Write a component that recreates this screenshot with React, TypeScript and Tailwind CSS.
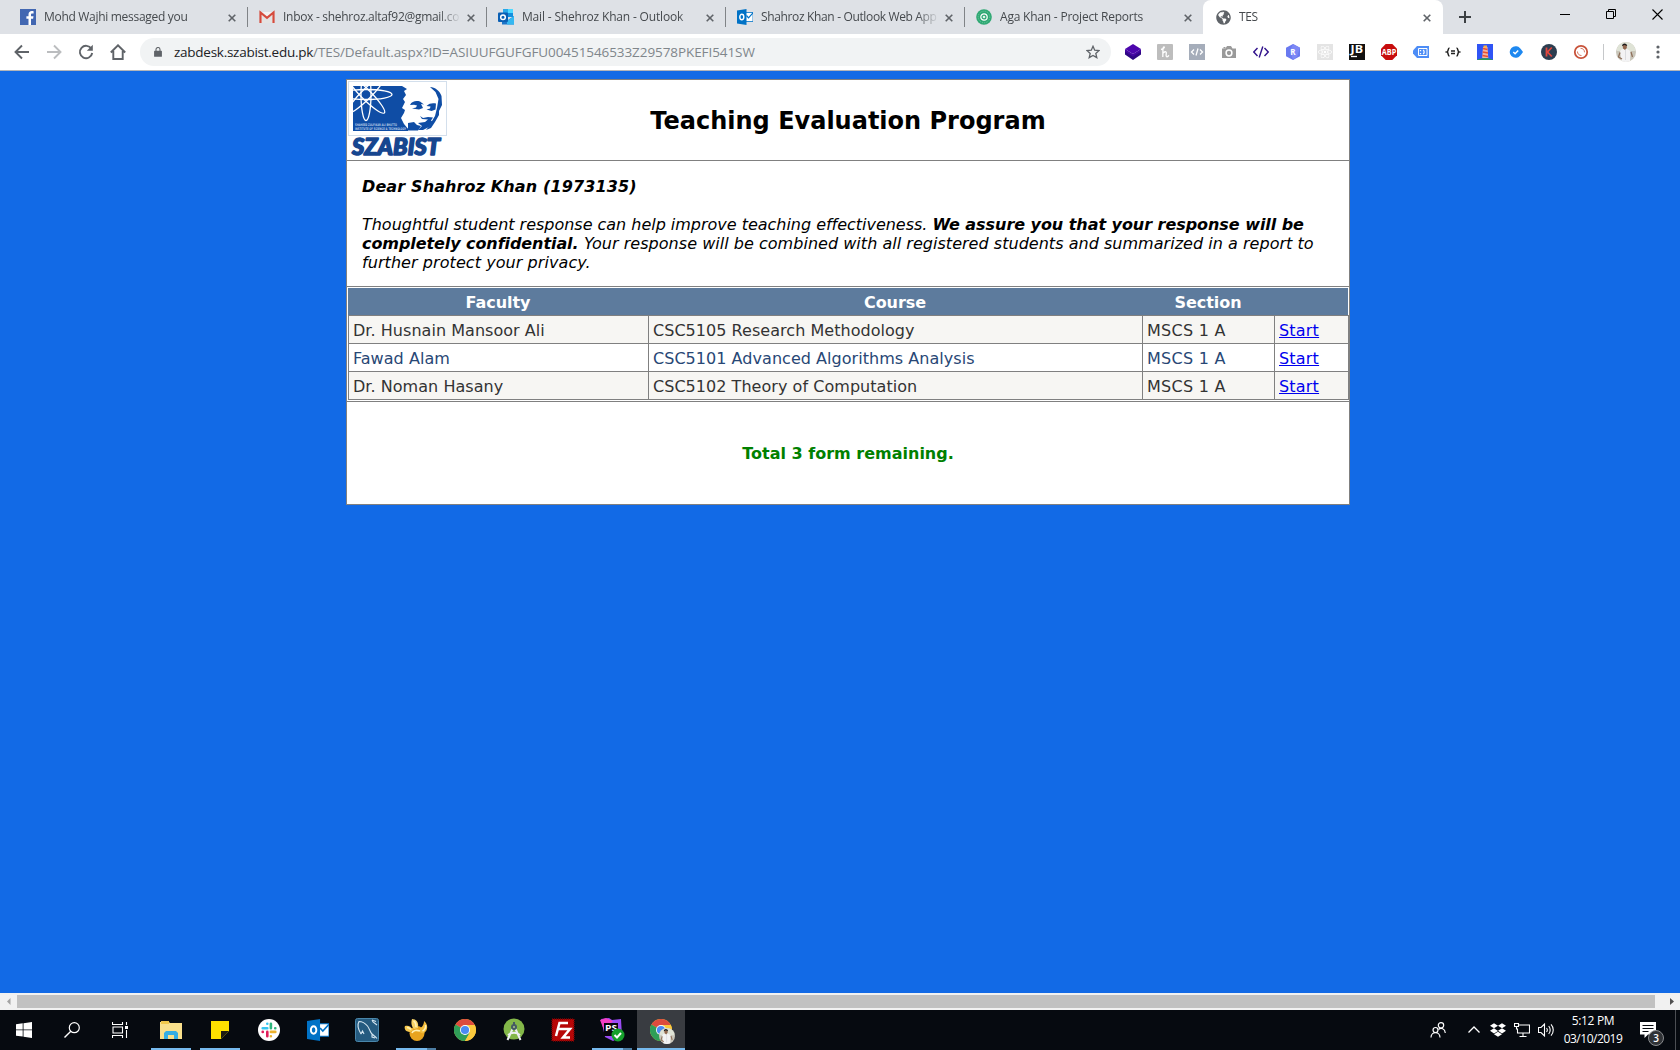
import type { ReactNode } from "react";
import { FaDropbox, FaReact, FaGlobeAmericas } from "react-icons/fa";

type IconProps = { children: ReactNode; size?: number; box?: string };

function Svg({ children, size = 16, box = "0 0 16 16" }: IconProps) {
  return (
    <svg width={size} height={size} viewBox={box} fill="none" className="block shrink-0">
      {children}
    </svg>
  );
}

/* ---------- tab icons ---------- */

const FacebookIcon = () => (
  <Svg>
    <path d="M0 0h16v16H0z" fill="#4267b2" />
    <path d="M11 16V9.800h2.100l.4-2.500H11V5.800c0-.8.3-1.300 1.300-1.300h1.300V2.300C13.300 2.200 12.600 2.100 11.800 2.100 9.800 2.100 8.500 3.300 8.500 5.500v1.800H6.400v2.500h2.100V16z" fill="#fff" />
  </Svg>
);

const GmailIcon = () => (
  <Svg>
    <path d="M1 3h14v11H1z" fill="#f2f2f2" />
    <path d="M3 14V6l5 4 5-4v8z" fill="#e3e3e3" />
    <path d="M1.500 14V3.500L8 8.800l6.500-5.300V14" stroke="#d54b3d" strokeWidth="2.200" />
  </Svg>
);

const OutlookNewIcon = () => (
  <Svg>
    <path d="M5 0h10v8H5z" fill="#1490df" />
    <path d="M10 0h5v4h-5z" fill="#50d9ff" />
    <path d="M5 0h5v4H5z" fill="#28a8ea" />
    <path d="M4 7l6 4 6-4v8.500H4z" fill="#1b75c9" />
    <path d="M9 12l7-5v8.500H9z" fill="#35b8f1" />
    <rect y="3.500" width="10" height="9.500" rx="1" fill="#0a5fb4" />
    <circle cx="5" cy="8.200" r="2.300" stroke="#fff" strokeWidth="1.500" />
  </Svg>
);

const OutlookIcon = ({ size = 16 }: { size?: number }) => (
  <Svg size={size}>
    <path d="M8 3.500h8v9H8z" fill="#fff" stroke="#0072c6" strokeWidth=".8" />
    <path d="M9.500 6.500l2 2.300 4.500-5" stroke="#0072c6" strokeWidth="1.200" />
    <path d="M0 1.500L9.500 0v16L0 14.500z" fill="#0072c6" />
    <ellipse cx="4.800" cy="8" rx="2" ry="2.700" stroke="#fff" strokeWidth="1.400" />
  </Svg>
);

const AgaIcon = () => (
  <Svg>
    <circle cx="8" cy="8" r="7.800" fill="#2fa873" />
    <circle cx="8" cy="8" r="5.800" stroke="#6ccaa0" strokeWidth="1" strokeDasharray="1 1" />
    <circle cx="8" cy="8" r="3.200" stroke="#fff" strokeWidth="1.200" />
    <circle cx="8" cy="8" r="1.300" fill="#dff5ea" />
  </Svg>
);

const CloseX = () => (
  <Svg size={8} box="0 0 8 8">
    <path d="M.7.7l6.600 6.600M7.300.7L.7 7.300" stroke="#5f6368" strokeWidth="1.600" />
  </Svg>
);

const tabs = [
  { icon: <FacebookIcon />, title: "Mohd Wajhi messaged you", ls: "tracking-[-0.3px]" },
  { icon: <GmailIcon />, title: "Inbox - shehroz.altaf92@gmail.co", ls: "tracking-[-0.29px]" },
  { icon: <OutlookNewIcon />, title: "Mail - Shehroz Khan - Outlook", ls: "tracking-[-0.17px]" },
  { icon: <OutlookIcon />, title: "Shahroz Khan - Outlook Web App", ls: "tracking-[-0.35px]" },
  { icon: <AgaIcon />, title: "Aga Khan - Project Reports", ls: "tracking-[-0.21px]" },
  { icon: <FaGlobeAmericas size={15} color="#5f6368" />, title: "TES", ls: "tracking-[-0.4px]", active: true },
];

function TabStrip() {
  return (
    <div className="flex h-[34px] bg-[#dee1e6] pl-2">
      {tabs.map((t, i) => (
        <div key={t.title} className={t.active ? "relative flex h-[34px] w-[240px] items-center rounded-t-lg bg-white pl-3" : "relative flex h-[34px] w-[239px] items-center pl-3"}>
          {i > 0 && !t.active && <span className="absolute left-0 top-[7px] h-5 w-px bg-[#808387]" />}
          <span className="flex w-4 justify-center">{t.icon}</span>
          <span className="ml-2 w-[177px] overflow-hidden whitespace-nowrap text-[12px] leading-4 text-[#45494d] [mask-image:linear-gradient(to_right,black_156px,transparent_178px)]">
            <span className={t.ls}>{t.title}</span>
          </span>
          <span className="ml-[7px] mt-px"><CloseX /></span>
        </div>
      ))}
      <div className="flex h-[34px] w-[43px] items-center justify-center">
        <Svg size={12} box="0 0 12 12"><path d="M6 0v12M0 6h12" stroke="#3c4043" strokeWidth="2" /></Svg>
      </div>
      <div className="ml-[56px] flex h-[28px] text-black">
        <span className="flex w-[46px] items-center justify-center"><Svg size={10} box="0 0 10 10"><path d="M0 5.500h10" stroke="#000" /></Svg></span>
        <span className="flex w-[46px] items-center justify-center"><Svg size={10} box="0 0 10 10"><path d="M.5 2.500h7v7h-7zM2.500 2.500v-2h7v7h-2" stroke="#000" /></Svg></span>
        <span className="flex w-[46px] items-center justify-center"><Svg size={11} box="0 0 11 11"><path d="M.5.5l10 10M10.500.5l-10 10" stroke="#000" strokeWidth="1.100" /></Svg></span>
      </div>
    </div>
  );
}

/* ---------- toolbar ---------- */

const extensions: ReactNode[] = [
  <Svg><path d="M8 0l8 5-8 5-8-5z" fill="#4c06ad" /><path d="M0 6l8 5 8-5v4.500L8 16l-8-5.500z" fill="#2e0783" /><path d="M0 5l8 5 8-5v2.500l-8 5-8-5z" fill="#4406a3" /></Svg>,
  <Svg><rect width="16" height="16" rx="1" fill="#bdbdbd" /><path d="M4 5.500C6.500 5 8.200 3 7 2.800 5.500 2.700 6 8 5.800 13M5.800 9.500C7 7.500 9.500 7 9.300 9c-.2 1.800-.5 3.800.7 3.800.9 0 1.500-.8 1.800-1.500" stroke="#fff" strokeWidth="1.300" /></Svg>,
  <Svg><path d="M0 0h16v16H0z" fill="#a5adba" /><path d="M5 5.500L2.500 8 5 10.500M11 5.500L13.500 8 11 10.500M9 4.500l-2 7" stroke="#fff" strokeWidth="1.300" /></Svg>,
  <Svg><path d="M1 4.500h3.500L6 2h4l1.500 2.500H15V14H1z" fill="#9a9a9a" /><path d="M2.500 3h2v1.500h-2z" fill="#9a9a9a" /><circle cx="8" cy="9" r="2.900" stroke="#fff" strokeWidth="1.500" /></Svg>,
  <Svg><path d="M4.500 4L.8 8l3.700 4M11.500 4l3.700 4-3.700 4M9.800 2.500L6.200 13.500" stroke="#32138c" strokeWidth="1.400" /></Svg>,
  <Svg><path d="M8 0l7 3.800v8.400L8 16l-7-3.800V3.800z" fill="#6979f0" /><path d="M8 0l7 3.800-3 9L8 16l-3-9z" fill="#7c88f5" /><text x="8" y="11" textAnchor="middle" fontSize="8" fontWeight="700" fill="#fff">R</text></Svg>,
  <span className="flex size-4 items-center justify-center bg-[#e4e4e4]"><FaReact size={14} color="#fff" /></span>,
  <Svg><path d="M0 0h16v16H0z" fill="#111" /><text x="1.500" y="9.200" fontSize="10" fontWeight="700" fill="#fff" textLength="12.500" lengthAdjust="spacingAndGlyphs">JB</text><path d="M2 12.500h6" stroke="#fff" strokeWidth="1.300" /></Svg>,
  <Svg><path d="M4.700 0h6.600L16 4.700v6.600L11.300 16H4.700L0 11.300V4.700z" fill="#c70d0d" /><text x=".8" y="11" fontSize="8" fontWeight="700" fill="#fff" textLength="14.400" lengthAdjust="spacingAndGlyphs">ABP</text></Svg>,
  <Svg><path d="M4 2h12v12H4L0 9.500v-3z" fill="#4d8df6" /><path d="M5.500 4.500h8.500v7H5.500z" stroke="#fff" /><path d="M7.500 6v1.200M7.500 9v1.200M10 6c1.500.5 1.500 3.500 0 4" stroke="#fff" strokeWidth="1.300" /></Svg>,
  <Svg><path d="M4.500 4C2.500 4 3.800 7.500 2 8c1.800.5.500 4 2.500 4M11.500 4c2 0 .7 3.500 2.500 4-1.800.5-.5 4-2.500 4M6 7h4M6 9.500h4" stroke="#222" strokeWidth="1.500" /></Svg>,
  <Svg><path d="M0 0h16v16H0z" fill="#2f54f5" /><path d="M6 3h4.500l.8 11H5.200z" fill="#f3b39c" /><path d="M6 4.500l4.500 1M5.800 8l5.200 1M5.500 11.500l5.500 1" stroke="#e9502f" strokeWidth="1.500" /><path d="M6.500 1.500h3.500V3.500H6.500z" fill="#f9b13b" /><path d="M0 16c2-2.500 14-2.500 16 0z" fill="#2a9b57" /></Svg>,
  <Svg><path d="M6.500 2.200c3 0 4.500 1.200 7.500 5.800-3 4.600-4.500 5.800-7.500 5.800a5.800 5.800 0 010-11.600z" fill="#1e88f0" /><path d="M4.300 8l1.800 1.700L9.200 6.500" stroke="#fff" strokeWidth="1.500" /></Svg>,
  <Svg><circle cx="8" cy="8" r="8" fill="#2c3e50" /><path d="M5.500 3.500v9M10.800 3.500L6.500 8l4.300 4.500" stroke="#e0473f" strokeWidth="1.800" /></Svg>,
  <Svg><circle cx="8" cy="8" r="6.200" stroke="#c8533a" strokeWidth="1.800" /><path d="M4.500 7.500a3.800 3.800 0 004 4M7.500 4.300a3.800 3.800 0 014 4" stroke="#c8533a" strokeWidth=".8" /></Svg>,
];

const Avatar = ({ size }: { size: number }) => (
  <Svg size={size} box="0 0 20 20">
    <circle cx="10" cy="10" r="10" fill="#c9c6ba" />
    <path d="M1 6a10 10 0 0118 0v3H1z" fill="#dfe3d6" />
    <path d="M4 9.500C5 7 7 7 9 7s4 .5 5.500 2.500L14 19a10 10 0 01-8.500 0z" fill="#f3f3f4" />
    <path d="M4 10.500L2.500 15 6 17M15 10l1.500 5" stroke="#8f705b" strokeWidth="1.300" />
    <path d="M9.500 8v10" stroke="#d4d5d9" strokeWidth=".8" />
    <path d="M6.500 3h4.300v3L9 8 7 6.500z" fill="#93684f" />
    <path d="M6 4c0-3.500 5.200-3.500 5.200 0L8.500 3z" fill="#1d1a19" />
  </Svg>
);

function Toolbar() {
  return (
    <div className="flex h-[37px] items-center border-b border-[#b3b5b9] bg-white pl-[6px]">
      <div className="flex">
        <span className="flex w-8 justify-center"><Svg><path d="M15 8H2M8 1.500L1.500 8 8 14.500" stroke="#5f6368" strokeWidth="1.900" /></Svg></span>
        <span className="flex w-8 justify-center"><Svg><path d="M1 8h13M8 1.500L14.500 8 8 14.500" stroke="#bbbdbf" strokeWidth="1.900" /></Svg></span>
        <span className="flex w-8 justify-center"><Svg><path d="M13.400 4.800A6.200 6.200 0 1014.200 9" stroke="#5f6368" strokeWidth="1.900" /><path d="M14.800.8v6H8.800z" fill="#5f6368" /></Svg></span>
        <span className="flex w-8 justify-center"><Svg><path d="M.8 8.500L8 1.300l7.200 7.200M3.300 7v8h9.400V7" stroke="#5f6368" strokeWidth="1.900" /></Svg></span>
      </div>
      <div className="ml-[6px] flex h-7 w-[971px] items-center rounded-full bg-[#f1f3f4] pl-[13px] pr-[11px]">
        <Svg size={10} box="0 0 10 12"><path d="M1 4.500h8a.7.700 0 01.7.700V11a.7.700 0 01-.7.700H1a.7.700 0 01-.7-.7V5.200A.7.700 0 011 4.500z" fill="#5f6368" /><path d="M2.600 5V3a2.400 2.400 0 014.800 0v2" stroke="#5f6368" strokeWidth="1.300" /></Svg>
        <span className="ml-[11px] whitespace-nowrap text-[13.500px] leading-5 text-[#80868b]">
          <span className="tracking-[-0.26px] text-[#202124]">zabdesk.szabist.edu.pk</span>
          <span className="tracking-[-0.08px]">/TES/Default.aspx?ID=ASIUUFGUFGFU00451546533Z29578PKEFI541SW</span>
        </span>
        <span className="ml-auto"><Svg size={14} box="0 0 14 14"><path d="M7 1.300l1.700 3.900 4.300.4-3.200 2.800 1 4.200L7 10.400l-3.800 2.200 1-4.200L1 5.600l4.300-.4z" stroke="#5f6368" strokeWidth="1.300" /></Svg></span>
      </div>
      <div className="ml-[6px] flex">
        {extensions.map((e, i) => (
          <span key={i} className="flex w-8 items-center justify-center">{e}</span>
        ))}
      </div>
      <span className="ml-[6px] h-4 w-px bg-[#c6c8ca]" />
      <span className="ml-3"><Avatar size={20} /></span>
      <span className="ml-[14px]"><Svg box="0 0 16 16" size={16}><circle cx="8" cy="3" r="1.600" fill="#5f6368" /><circle cx="8" cy="8" r="1.600" fill="#5f6368" /><circle cx="8" cy="13" r="1.600" fill="#5f6368" /></Svg></span>
    </div>
  );
}

/* ---------- page ---------- */

function Logo() {
  return (
    <svg width="100" height="78" viewBox="0 0 100 78" className="block">
      <defs>
        <clipPath id="panel"><path d="M5 5h55v45H5z" /></clipPath>
      </defs>
      <rect x=".5" y=".5" width="98" height="54" fill="#fff" stroke="#d3dfec" />
      <g clipPath="url(#panel)">
        <path d="M5 5h49l5 3-3 2 2 4-3 4 2 3-3 6 3 2-1 3-3 5 3 6 6 7H5z" fill="#0f4da5" />
        <g stroke="#fff" strokeWidth="1.300" fill="none">
          <ellipse cx="18" cy="13.500" rx="26" ry="5" />
          <ellipse cx="18" cy="13.500" rx="26" ry="5" transform="rotate(45 18 13.500)" />
          <ellipse cx="18" cy="13.500" rx="26" ry="5" transform="rotate(90 18 13.500)" />
          <ellipse cx="18" cy="13.500" rx="26" ry="5" transform="rotate(135 18 13.500)" />
        </g>
      </g>
      <text x="7" y="44.500" fontSize="3.500" fill="#b9cbe6" fontWeight="700" textLength="42" lengthAdjust="spacingAndGlyphs">SHAHEED ZULFIKAR ALI BHUTTO</text>
      <text x="7" y="48.500" fontSize="3.500" fill="#b9cbe6" fontWeight="700" textLength="51" lengthAdjust="spacingAndGlyphs">INSTITUTE OF SCIENCE &amp; TECHNOLOGY</text>
      <path d="M82 6c5 0 10 4 11.500 9l.5 9-3 6v4l-4 7-4 6-5 2c2-3 5-5 6-9l3-5 2-8 1.500-9-3-7z" fill="#0f4da5" />
      <path d="M62 24c2-4 6-4.500 10-3.500l4 3-3-.5 2 4-4 1.500-7-1 4-1 1-2-3-.8z" fill="#0f4da5" />
      <path d="M78.500 25c3-3 6-3 9.500-2.500l-.5 6-4 1.500-5-1.500 3.500-1 .5-2z" fill="#0f4da5" />
      <path d="M72 35l3 2 5-1 5 .5-2 3 2 1.500-4 5-6 3h-5l4-4-4-3 7-1 3-2.500-6-.5z" fill="#0f4da5" />
      <path d="M60 42l6-1 3 3 4 1-3 4.500H60z" fill="#0f4da5" />
      <text x="4" y="74" fontFamily="Lato" fontSize="22" fontWeight="900" fontStyle="italic" fill="#17468f" stroke="#17468f" strokeWidth="1.500" strokeLinejoin="round" textLength="88" lengthAdjust="spacingAndGlyphs">SZABIST</text>
    </svg>
  );
}

const rows = [
  { faculty: "Dr. Husnain Mansoor Ali", course: "CSC5105 Research Methodology", section: "MSCS 1 A" },
  { faculty: "Fawad Alam", course: "CSC5101 Advanced Algorithms Analysis", section: "MSCS 1 A" },
  { faculty: "Dr. Noman Hasany", course: "CSC5102 Theory of Computation", section: "MSCS 1 A" },
];

function EvaluationTable() {
  return (
    <div className="border-y border-[#808080] py-px pl-px text-[16px] leading-[19px]">
      <div className="mr-px grid h-[27px] grid-cols-[300px_494px_132px_74px] bg-[#5d7b9d] pt-[5px] text-center font-bold tracking-[-0.05px] text-white">
        <div>Faculty</div>
        <div>Course</div>
        <div>Section</div>
      </div>
      <div className="border-l border-t border-[#808080]">
        {rows.map((r, i) => (
          <div key={r.faculty} className={i % 2 ? "grid grid-cols-[300px_494px_132px_74px] bg-white text-[#284775]" : "grid grid-cols-[300px_494px_132px_74px] bg-[#f7f6f3] text-[#333333]"}>
            <div className="h-7 border-b border-r border-[#808080] pl-1 pt-[5px] tracking-[0.04px]">{r.faculty}</div>
            <div className="h-7 border-b border-r border-[#808080] pl-1 pt-[5px] tracking-[0.04px]">{r.course}</div>
            <div className="h-7 border-b border-r border-[#808080] pl-1 pt-[5px] tracking-[0.25px]">{r.section}</div>
            <div className="h-7 border-b border-r border-[#808080] pl-1 pt-[5px] tracking-[0.2px]"><a className="text-[#0000ee] underline">Start</a></div>
          </div>
        ))}
      </div>
    </div>
  );
}

function Page() {
  return (
    <main className="h-[922px] bg-[#126ae6] pt-2 font-['DejaVu_Sans',sans-serif] text-black">
      <div className="ml-[346px] h-[426px] w-[1004px] border border-[#808080] bg-white">
        <div className="relative flex h-[81px] items-center justify-center border-b border-[#808080]">
          <div className="absolute left-px top-px"><Logo /></div>
          <h1 className="pt-0.5 text-[24px] font-bold leading-[29px]">Teaching Evaluation Program</h1>
        </div>
        <div className="whitespace-nowrap pb-[14px] pl-[15px] pt-4 text-[16px] italic leading-[19px]">
          <p className="font-bold tracking-[0.12px]">Dear Shahroz Khan (1973135)</p>
          <p className="mt-[19px]"><span className="tracking-[-0.02px]">Thoughtful student response can help improve teaching effectiveness. </span><b className="tracking-[-0.05px]">We assure you that your response will be</b></p>
          <p><b className="tracking-[-0.08px]">completely confidential. </b><span className="tracking-[0.03px]">Your response will be combined with all registered students and summarized in a report to</span></p>
          <p className="tracking-[0.07px]">further protect your privacy.</p>
        </div>
        <EvaluationTable />
        <p className="mt-[42px] text-center text-[16px] font-bold leading-[19px] text-[#008000]">Total 3 form remaining.</p>
      </div>
    </main>
  );
}

function Scrollbar() {
  return (
    <div className="flex h-[17px] items-center bg-[#f1f1f1]">
      <span className="flex w-[17px] justify-center"><Svg size={7} box="0 0 7 7"><path d="M5.500 0v7L2 3.500z" fill="#a3a3a3" /></Svg></span>
      <span className="h-[13px] w-[1638px] bg-[#c1c1c1]" />
      <span className="flex w-[25px] justify-end pr-1"><Svg size={7} box="0 0 7 7"><path d="M1 0v7l4-3.500z" fill="#505050" /></Svg></span>
    </div>
  );
}

/* ---------- taskbar ---------- */

const ChromeIcon = ({ size = 22 }: { size?: number }) => (
  <Svg size={size} box="0 0 22 22">
    <circle cx="11" cy="11" r="11" fill="#fbc93d" />
    <path d="M11 11L1.470 5.500A11 11 0 0120.530 5.500z" fill="#dd4b3e" />
    <path d="M1.470 5.500A11 11 0 0011 22l4.760-8.250L11 11z" fill="#2f9e58" />
    <path d="M11 6h9.800A11 11 0 0111 22l4.760-8.250z" fill="#fbc93d" />
    <circle cx="11" cy="11" r="5" fill="#fff" />
    <circle cx="11" cy="11" r="4.100" fill="#4a8af4" />
  </Svg>
);

type TaskbarApp = { name: string; icon: ReactNode; bar?: "full" | "split"; active?: boolean };

const apps: TaskbarApp[] = [
  { name: "explorer", bar: "full", icon: <Svg size={22} box="0 0 22 22"><path d="M0 3h9l1 1h12v16H0z" fill="#f9e08c" /><path d="M1 2h8v3H1z" fill="#f1c84b" /><path d="M4 20v-6l2-2h10l2 2v6h-4v-4H8v4z" fill="#35aee4" /></Svg> },
  { name: "notes", bar: "full", icon: <Svg size={18} box="0 0 18 18"><path d="M0 0h18v10l-8 8H0z" fill="#fee100" /><path d="M10 10h8l-8 8z" fill="#1c1a12" /></Svg> },
  { name: "slack", icon: <Svg size={22} box="0 0 22 22"><circle cx="11" cy="11" r="11" fill="#fff" /><g strokeWidth="2.600" strokeLinecap="round"><path d="M9.300 4.700v.1M4.700 9.200h4.600" stroke="#36c5f0" /><path d="M12.900 4.700v4.600M17.300 9.200h-.1" stroke="#2eb67d" /><path d="M17.300 12.900h-4.400M12.900 17.300v-.1" stroke="#ecb22e" /><path d="M9.300 17.300v-4.400M4.700 12.900h.1" stroke="#e01e5a" /></g></Svg> },
  { name: "outlook", icon: <OutlookIcon size={22} /> },
  { name: "mysql", icon: <Svg size={24} box="0 0 24 24"><rect x=".5" y=".5" width="23" height="23" rx="2" fill="#255b80" stroke="#4986ab" /><path d="M6 16C3 11 2.500 6 4 3.500c3 0 6 1.500 8.500 4.500 2 2.500 2.500 6 4.500 8 1.500 1.500 3 2 5 4.500M17 16v3l3 1M6 16l1.500-3L9 16M17 2l1 2 4 3M17 2l4 1.500" stroke="#d5e6f0" strokeWidth="1.100" /></Svg> },
  { name: "gold", bar: "split", icon: <Svg size={24} box="0 0 24 24"><circle cx="13" cy="15.500" r="7.500" fill="#e8a41f" /><path d="M6 14C1 14 0 10 1 8c3-1 6 0 8 4z" fill="#f6c84e" /><path d="M8 1c4 0 7 3 6 9l-4 1C7 8 7 4 8 1z" fill="#f8d467" /><path d="M20 3c4 3 4.500 9 0 12-3 1-5-1-4-4 1-2 4-3 4-8z" fill="#f3bd3b" /><path d="M8 15c1-3 5-3 8-2M9.500 3c2 1 2.500 3 2.500 6M3 9.500c2 0 3 1 4 2M21.500 7c.5 3-1 5-3 6" stroke="#fff2b5" strokeWidth="1.600" /></Svg> },
  { name: "chrome", icon: <ChromeIcon /> },
  { name: "android", icon: <Svg size={24} box="0 0 24 24"><circle cx="12" cy="11" r="10.500" fill="#83b749" /><path d="M10.500 11L5.500 22M13.500 11l5 11M6 17c4-3 8-3 12 0" stroke="#eceff1" strokeWidth="2" /><circle cx="12" cy="9" r="3" fill="#455a64" /><circle cx="12" cy="9" r="1" fill="#a8c989" /><path d="M12 4v3" stroke="#455a64" strokeWidth="2" /></Svg> },
  { name: "filezilla", icon: <Svg size={24} box="0 0 24 24"><path d="M1 1h22v22H1z" fill="#b60707" stroke="#780303" strokeDasharray="1 1" strokeWidth="1.500" /><path d="M5 18L8.500 5H17M6 11h8M12.500 11H19l-7 8.500h7" stroke="#fff" strokeWidth="2.500" /></Svg> },
  { name: "phpstorm", bar: "split", icon: <Svg size={26} box="0 0 26 26"><path d="M2 2l8-1 3 2 9-1 1 17-9 5-8-4z" fill="#9b4bf5" /><path d="M1 3l6-2 7 3-9 9z" fill="#f33fc4" /><path d="M5 6h14v13H5z" fill="#08050c" /><text x="6" y="14" fontSize="9.500" fontWeight="700" fill="#fff" textLength="12" lengthAdjust="spacingAndGlyphs">PS</text><circle cx="19" cy="18" r="6.500" fill="#15a02c" /><path d="M15.500 18l2.500 2.500 4-4.500" stroke="#fff" strokeWidth="2" /></Svg> },
  { name: "chrome-user", bar: "full", active: true, icon: <span className="relative"><ChromeIcon /><span className="absolute left-[9px] top-[9px]"><Avatar size={16} /></span></span> },
];

function Taskbar() {
  return (
    <footer className="flex h-10 bg-[#060a10] text-white">
      <span className="flex w-12 items-center justify-center"><Svg><path d="M0 2.200L6.700 1.300v6.200H0zM7.500 1.200L16 0v7.500H7.500zM0 8.300h6.700v6.300L0 13.700zM7.500 8.300H16V16l-8.500-1.200z" fill="#fff" /></Svg></span>
      <span className="flex w-12 items-center justify-center"><Svg><circle cx="10.300" cy="5.700" r="5" stroke="#fff" strokeWidth="1.200" /><path d="M6.800 9.300L.5 15.500" stroke="#fff" strokeWidth="1.400" /></Svg></span>
      <span className="flex w-12 items-center justify-center"><Svg><path d="M.5 0v2.500h10V0M1 5h9.500v6H1zM.5 16v-2.500h10V16M14.500 0v3M14.500 8v8" stroke="#fff" strokeWidth="1.100" /><path d="M13 4h3v3h-3z" fill="#fff" /></Svg></span>
      <div className="ml-[3px] flex gap-px">
        {apps.map((a) => (
          <span key={a.name} className={a.active ? "relative flex w-12 items-center justify-center bg-[#393c41]" : "relative flex w-12 items-center justify-center"}>
            {a.icon}
            {a.bar && <span className={a.active ? "absolute bottom-0 left-0 h-0.5 w-12 bg-[#76b9ed]" : "absolute bottom-0 left-1 h-0.5 w-10 bg-[#76b9ed]"} />}
            {a.bar === "split" && <span className="absolute bottom-0 left-[35px] h-0.5 w-[9px] bg-[#4c7da3]" />}
          </span>
        ))}
      </div>
      <div className="ml-auto flex items-center">
        <Svg size={16}><circle cx="11" cy="3.300" r="2.700" stroke="#fff" strokeWidth="1.200" /><circle cx="5.500" cy="8" r="2.500" stroke="#fff" strokeWidth="1.200" /><path d="M1 15.500c0-6.500 9-6.500 9 0M8.500 7.500C11 5.500 15 6.500 15.300 11" stroke="#fff" strokeWidth="1.200" /></Svg>
        <span className="ml-[22px]"><Svg size={12} box="0 0 12 12"><path d="M.5 8.500L6 3l5.500 5.500" stroke="#fff" strokeWidth="1.300" /></Svg></span>
        <span className="ml-[10px]"><FaDropbox size={16} /></span>
        <span className="ml-2"><Svg><path d="M5 3h10.500v8H3.500V6.500M9 11v3.500M5.500 14.500h7M.5 1.500h4v3h-4zM2.500 4.500v3" stroke="#fff" strokeWidth="1.100" /></Svg></span>
        <span className="ml-2"><Svg><path d="M.5 5.500h2.500L6.500 2v12L3 10.500H.5zM8.500 6c1 1.200 1 2.800 0 4M10.700 4c2 2.200 2 5.800 0 8M13 2.300c3 3.200 3 8.200 0 11.400" stroke="#fff" strokeWidth="1.100" /></Svg></span>
        <div className="ml-[8px] flex w-[62px] flex-col items-center whitespace-nowrap text-[12px] leading-[18px]">
          <span className="tracking-[-0.35px]">5:12 PM</span>
          <span className="tracking-[-0.5px]">03/10/2019</span>
        </div>
        <span className="relative ml-4 mr-[19px]">
          <Svg size={16}><path d="M0 0h16v12.500H8L4.500 16v-3.500H0z" fill="#fff" /><path d="M2.500 3.500h11M2.500 6.500h11M2.500 9.500h6" stroke="#060a10" /></Svg>
          <span className="absolute left-2 top-2 flex size-4 items-center justify-center rounded-full border border-[#8a8c8f] bg-[#2f3236] text-[10px] font-semibold leading-none">3</span>
        </span>
        <span className="mr-1 h-10 w-px bg-[#4b4e53]" />
      </div>
    </footer>
  );
}

export default function App() {
  return (
    <div className="h-[1050px] w-[1680px] overflow-hidden font-['Open_Sans','Noto_Sans',sans-serif]">
      <TabStrip />
      <Toolbar />
      <Page />
      <Scrollbar />
      <Taskbar />
    </div>
  );
}
